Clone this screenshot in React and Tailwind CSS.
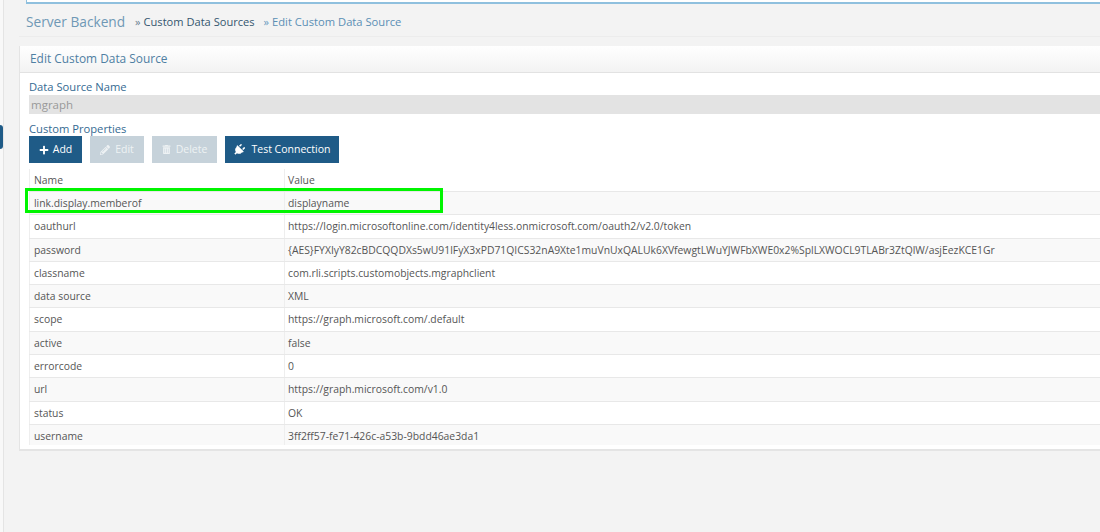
import { FaPlus, FaPencilAlt, FaTrashAlt, FaPlug } from "react-icons/fa"

const rows = [
  ["link.display.memberof", "displayname"],
  ["oauthurl", "https://login.microsoftonline.com/identity4less.onmicrosoft.com/oauth2/v2.0/token"],
  ["password", "{AES}FYXIyY82cBDCQQDXs5wU91lFyX3xPD71QICS32nA9Xte1muVnUxQALUk6XVfewgtLWuYJWFbXWE0x2%SplLXWOCL9TLABr3ZtQlW/asjEezKCE1Gr"],
  ["classname", "com.rli.scripts.customobjects.mgraphclient"],
  ["data source", "XML"],
  ["scope", "https://graph.microsoft.com/.default"],
  ["active", "false"],
  ["errorcode", "0"],
  ["url", "https://graph.microsoft.com/v1.0"],
  ["status", "OK"],
  ["username", "3ff2ff57-fe71-426c-a53b-9bdd46ae3da1"],
]

const App = () => {
  return (
    <div className="flex h-[532px] w-[1100px] overflow-hidden bg-[#f3f3f3] font-['Open_Sans',sans-serif]">
      {/* left rail */}
      <div className="relative w-[4px] shrink-0 border-r border-[#e4e4e4] bg-[#f8f8f8]">
        <div className="absolute left-0 top-[125px] h-[24px] w-[3px] rounded-r-full bg-[#1f5b87]"></div>
      </div>

      <div className="min-w-0 flex-1">
        <div className="ml-[22px] h-[4px] border-b-2 border-l border-[#8fc0de] bg-white"></div>

        <div className="ml-[15px] flex h-[33px] items-center border-b border-[#ececec] pl-[7px] pt-[5px]">
          <span className="text-[13.7px] text-[#6f98b5]">Server Backend</span>
          <span className="ml-[10px] text-[11px] text-[#6a7f90]">»</span>
          <span className="ml-[3px] text-[11.1px] text-[#34566f]">Custom Data Sources</span>
          <span className="ml-[9px] text-[11px] text-[#6a9ac0]">»</span>
          <span className="ml-[3px] text-[11.2px] text-[#5b8fb5]">Edit Custom Data Source</span>
        </div>

        <div className="ml-[15px] mt-[9px] h-[405px] border-b-2 border-l border-[#e4e4e4] bg-white">
          <div className="flex h-[27px] items-center border-b border-[#e2e2e2] bg-gradient-to-b from-white to-[#f3f3f3] pl-[10px] text-[11.9px] text-[#4f7fa3]">
            Edit Custom Data Source
          </div>

          <div className="pl-[9px] pt-[5px]">
            <div className="h-[17px] text-[11.2px] leading-[17px] text-[#356a92]">Data Source Name</div>
            <div className="flex h-[19px] items-center bg-[#e3e3e3] pl-[2px] text-[11.5px] text-[#999999]">mgraph</div>

            <div className="mt-[7px] h-[15px] text-[11.2px] leading-[15px] text-[#356a92]">Custom Properties</div>

            <div className="flex h-[27px] gap-[8px] text-[10.5px]">
              <button className="flex w-[53px] items-center justify-center gap-[4px] bg-[#1f5b87] text-white">
                <FaPlus className="size-[10px]" /> Add
              </button>
              <button className="flex w-[54px] items-center justify-center gap-[5px] bg-[#c6d2da] text-[#eef2f4]">
                <FaPencilAlt className="size-[10px]" /> Edit
              </button>
              <button className="flex w-[65px] items-center justify-center gap-[5px] bg-[#c6d2da] text-[#eef2f4]">
                <FaTrashAlt className="size-[9px]" /> Delete
              </button>
              <button className="flex w-[114px] items-center justify-center gap-[6px] bg-[#1f5b87] text-white">
                <FaPlug className="size-[12px] rotate-45" /> Test Connection
              </button>
            </div>

            <div className="mt-[6px] flex h-[22px] items-center text-[10.37px] text-[#555555]">
              <div className="h-full w-[255px] border-l border-[#eeeeee] pl-[4px] leading-[22px]">Name</div>
              <div className="h-full border-l border-[#eeeeee] pl-[3px] leading-[22px]">Value</div>
            </div>

            <div className="relative h-[254px] overflow-hidden">
              {rows.map((row, i) => (
                <div
                  key={row[0]}
                  className={`flex h-[23.3px] items-center border-t border-[#e8e8e8] text-[10.37px] text-[#555555] ${i % 2 === 0 ? "bg-[#f9f9f9]" : "bg-white"}`}
                >
                  <div className="h-full w-[255px] border-l border-[#eeeeee] pl-[4px] leading-[22px]">{row[0]}</div>
                  <div className="h-full whitespace-nowrap border-l border-[#eeeeee] pl-[3px] leading-[22px]">{row[1]}</div>
                </div>
              ))}
            </div>
            <div className="absolute left-[25px] top-[188px] h-[25px] w-[418px] border-[3px] border-[#00f500]"></div>
          </div>
        </div>
      </div>
    </div>
  )
}

export default App
